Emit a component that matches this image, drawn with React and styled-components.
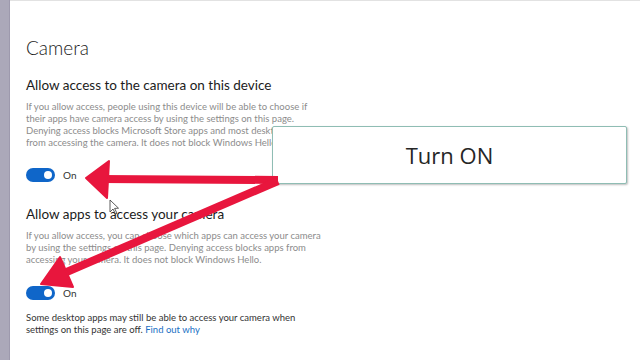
import React from "react";
import styled, { createGlobalStyle } from "styled-components";

const Global = createGlobalStyle`
  html, body { margin: 0; padding: 0; background: #fff; }
  body { font-family: "Segoe UI", Lato, "Noto Sans", sans-serif; }
`;

const Page = styled.div`
  position: relative;
  width: 640px;
  height: 360px;
  overflow: hidden;
  display: flex;
  background: #fff;
`;

const Strip = styled.div`
  width: 10px;
  flex: none;
  background: #aba8b9;
  border-right: 1px solid #9d99ad;
  box-sizing: border-box;
`;

const Content = styled.div`
  flex: 1;
  border-top: 1px solid #e2e2e2;
  padding: 35px 0 0 16px;
  display: flex;
  flex-direction: column;
  align-items: flex-start;
`;

const Title = styled.h1`
  margin: 0;
  font-size: 19px;
  font-weight: 300;
  line-height: 24px;
  color: #1b1b1b;
`;

const Heading = styled.h2`
  margin: ${(p) => p.$mt}px 0 0;
  font-size: 13.5px;
  font-weight: 400;
  line-height: 20px;
  color: #1b1b1b;
`;

const Para = styled.p`
  margin: ${(p) => p.$mt}px 0 0;
  font-size: 9.5px;
  line-height: 12px;
  color: ${(p) => (p.$dark ? "#333" : "#8c8c8c")};
`;

const Link = styled.a`
  color: #1a6fc4;
  text-decoration: none;
`;

const ToggleRow = styled.div`
  margin-top: ${(p) => p.$mt}px;
  display: flex;
  align-items: center;
  gap: 8px;
  height: 14px;
`;

const Track = styled.span`
  position: relative;
  width: 29px;
  height: 14px;
  border-radius: 7px;
  background: #0f66c9;
`;

const Knob = styled.span`
  position: absolute;
  right: 3px;
  top: 3px;
  width: 8px;
  height: 8px;
  border-radius: 50%;
  background: #fff;
`;

const ToggleLabel = styled.span`
  font-size: 10px;
  color: #333;
`;

const Callout = styled.div`
  position: absolute;
  left: 272px;
  top: 126px;
  width: 355px;
  height: 58px;
  box-sizing: border-box;
  background: #fff;
  border: 1px solid #8fbdb4;
  border-radius: 2px;
  box-shadow: 1px 1px 2px rgba(0, 0, 0, 0.25);
  display: flex;
  align-items: center;
  justify-content: center;
  font-family: "Open Sans", "Noto Sans", sans-serif;
  font-size: 22px;
  font-weight: 500;
  color: #262626;
`;

const Overlay = styled.svg`
  position: absolute;
  left: 0;
  top: 0;
  width: 640px;
  height: 360px;
  pointer-events: none;
`;

function Toggle({ mt }) {
  return (
    <ToggleRow $mt={mt}>
      <Track>
        <Knob />
      </Track>
      <ToggleLabel>On</ToggleLabel>
    </ToggleRow>
  );
}

export default function App() {
  return (
    <>
      <Global />
      <Page>
        <Strip />
        <Content>
          <Title>Camera</Title>
          <Heading $mt={15}>Allow access to the camera on this device</Heading>
          <Para $mt={6}>
            If you allow access, people using this device will be able to choose if
            <br />
            their apps have camera access by using the settings on this page.
            <br />
            Denying access blocks Microsoft Store apps and most desktop apps
            <br />
            from accessing the camera. It does not block Windows Hello.
          </Para>
          <Toggle mt={19} />
          <Heading $mt={22}>Allow apps to access your camera</Heading>
          <Para $mt={6}>
            If you allow access, you can choose which apps can access your camera
            <br />
            by using the settings on this page. Denying access blocks apps from
            <br />
            accessing your camera. It does not block Windows Hello.
          </Para>
          <Toggle mt={20} />
          <Para $mt={12} $dark>
            Some desktop apps may still be able to access your camera when
            <br />
            settings on this page are off. <Link>Find out why</Link>
          </Para>
        </Content>
        <Callout>Turn ON</Callout>
        <Overlay viewBox="0 0 640 360">
          <g fill="#e8163d" stroke="#e8163d" strokeLinejoin="round">
            <line x1="278" y1="180" x2="100" y2="179" strokeWidth="8" />
            <polygon points="86,178 109,161 107,198" strokeWidth="2" />
            <line x1="278" y1="181" x2="62" y2="274" strokeWidth="8" />
            <polygon points="41,284 60,257 73,287" strokeWidth="2" />
          </g>
          <path
            d="M110 200 L110 212 L113 209 L115.5 214 L117 213.3 L114.6 208.4 L118.5 208.2 Z"
            fill="#fff"
            stroke="#333"
            strokeWidth="0.8"
            strokeLinejoin="round"
          />
        </Overlay>
      </Page>
    </>
  );
}
